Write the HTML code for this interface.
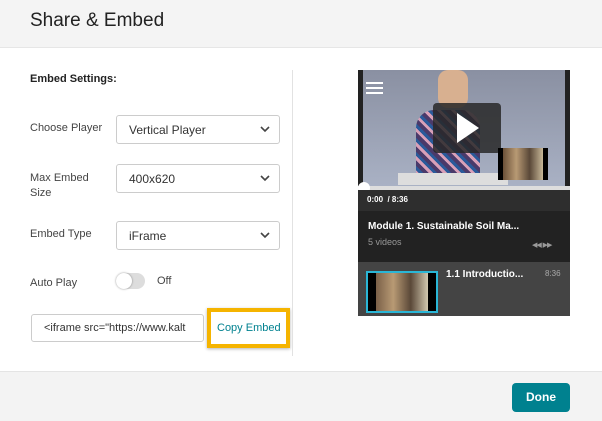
<!DOCTYPE html>
<html><head><style>
*{box-sizing:border-box;margin:0;padding:0}
body{width:602px;height:421px;background:#fff;font-family:"Liberation Sans",sans-serif;position:relative;overflow:hidden;color:#333}
.abs{position:absolute}
.hdr{left:0;top:0;width:602px;height:48px;background:#f4f4f4;border-bottom:1px solid #e6e6e6}
.hdr span{position:absolute;left:30px;top:10px;font-size:19px;color:#222}
.lbl{font-size:11px;color:#444}
.sel{left:116px;width:164px;height:29px;border:1px solid #ccc;border-radius:3px;font-size:12px;padding:7px 12px;color:#333}
.sel svg{position:absolute;right:9px;top:10px}
.ftr{left:0;top:371px;width:602px;height:50px;background:#f3f3f3;border-top:1px solid #e4e4e4}
</style></head><body>
<div class="abs hdr"><span>Share &amp; Embed</span></div>
<div class="abs" style="left:30px;top:73px;font-size:11px;font-weight:bold;color:#222">Embed Settings:</div>
<div class="abs lbl" style="left:30px;top:122px">Choose Player</div>
<div class="abs sel" style="top:115px">Vertical Player<svg width="10" height="7" viewBox="0 0 10 7"><path d="M1 1l4 4 4-4" fill="none" stroke="#444" stroke-width="1.6"/></svg></div>
<div class="abs lbl" style="left:30px;top:171px;line-height:15px">Max Embed<br>Size</div>
<div class="abs sel" style="top:164px">400x620<svg width="10" height="7" viewBox="0 0 10 7"><path d="M1 1l4 4 4-4" fill="none" stroke="#444" stroke-width="1.6"/></svg></div>
<div class="abs lbl" style="left:30px;top:228px">Embed Type</div>
<div class="abs sel" style="top:221px">iFrame<svg width="10" height="7" viewBox="0 0 10 7"><path d="M1 1l4 4 4-4" fill="none" stroke="#444" stroke-width="1.6"/></svg></div>
<div class="abs lbl" style="left:30px;top:277px">Auto Play</div>
<div class="abs" style="left:116px;top:273px;width:29px;height:16px;border-radius:8px;background:#ddd"></div>
<div class="abs" style="left:116px;top:273px;width:16px;height:16px;border-radius:8px;background:#fff;box-shadow:0 0 2px rgba(0,0,0,.4)"></div>
<div class="abs lbl" style="left:157px;top:275px">Off</div>
<div class="abs" style="left:31px;top:314px;width:173px;height:28px;border:1px solid #ccc;border-radius:3px;font-size:11px;padding:7px 0 0 12px;overflow:hidden;white-space:nowrap;color:#333">&lt;iframe src="https://www.kalt</div>
<div class="abs" style="left:207px;top:308px;width:83px;height:40px;border:4px solid #f5b400;box-shadow:0 1px 3px rgba(0,0,0,.3);font-size:11px;color:#00818f;padding:10px 0 0 6px">Copy Embed</div>
<div class="abs" style="left:292px;top:70px;width:1px;height:286px;background:#e2e2e2"></div>
<!-- player -->
<div class="abs" style="left:358px;top:70px;width:212px;height:246px;background:#222;overflow:hidden">
 <div class="abs" style="left:5px;top:0;width:202px;height:116px;background:linear-gradient(#8a90a2,#a9b1c4)"></div>
 <div class="abs" style="left:58px;top:40px;width:64px;height:70px;background:repeating-linear-gradient(45deg,#4a3a6a 0 4px,#d8a0b8 4px 7px,#2a5a9a 7px 10px);border-radius:18px 18px 0 0"></div>
 <div class="abs" style="left:80px;top:0;width:30px;height:38px;background:#d8b090;border-radius:10px"></div>
 <div class="abs" style="left:40px;top:103px;width:110px;height:12px;background:#ddd"></div>
 <div class="abs" style="left:75px;top:33px;width:68px;height:50px;background:rgba(40,40,40,.85);border-radius:4px"></div>
 <svg class="abs" style="left:99px;top:43px" width="22" height="30"><path d="M0 0L22 15L0 30Z" fill="#fff"/></svg>
 <div class="abs" style="left:140px;top:78px;width:50px;height:32px;background:#000"></div>
 <div class="abs" style="left:145px;top:78px;width:40px;height:32px;background:linear-gradient(90deg,#6a5038,#b89a74,#5a4838,#c8b898)"></div>
 <div class="abs" style="left:8px;top:12px;width:17px;height:2px;background:#fff;box-shadow:0 5px 0 #fff,0 10px 0 #fff"></div>
 <div class="abs" style="left:0;top:116px;width:212px;height:4px;background:#ddd"></div>
 <div class="abs" style="left:0;top:112px;width:12px;height:12px;border-radius:6px;background:#fff"></div>
 <div class="abs" style="left:0;top:120px;width:212px;height:21px;background:#2e2e2e;color:#fff;font-size:8px;font-weight:bold;padding:5px 0 0 9px">0:00 &nbsp;/ 8:36</div>
 <div class="abs" style="left:10px;top:151px;color:#fff;font-size:10px;font-weight:bold">Module 1. Sustainable Soil Ma...</div>
 <div class="abs" style="left:10px;top:167px;color:#999;font-size:9px">5 videos</div>
 <div class="abs" style="left:174px;top:171px;color:#999;font-size:7px;letter-spacing:-1px">◀◀ &nbsp;▶▶</div>
 <div class="abs" style="left:0;top:192px;width:212px;height:54px;background:#444"></div>
 <div class="abs" style="left:8px;top:201px;width:72px;height:42px;border:2px solid #2ab6d6;background:#000"></div>
 <div class="abs" style="left:18px;top:203px;width:52px;height:38px;background:linear-gradient(90deg,#7a6048,#b89a74,#5a4838,#d2c8b0)"></div>
 <div class="abs" style="left:88px;top:199px;color:#fff;font-size:10px;font-weight:bold">1.1 Introductio...</div>
 <div class="abs" style="left:187px;top:199px;color:#aaa;font-size:8px">8:36</div>
</div>
<div class="abs ftr"></div>
<div class="abs" style="left:512px;top:383px;width:58px;height:29px;background:#00818f;border-radius:4px;color:#fff;font-size:12px;font-weight:bold;text-align:center;line-height:29px">Done</div>
</body></html>
